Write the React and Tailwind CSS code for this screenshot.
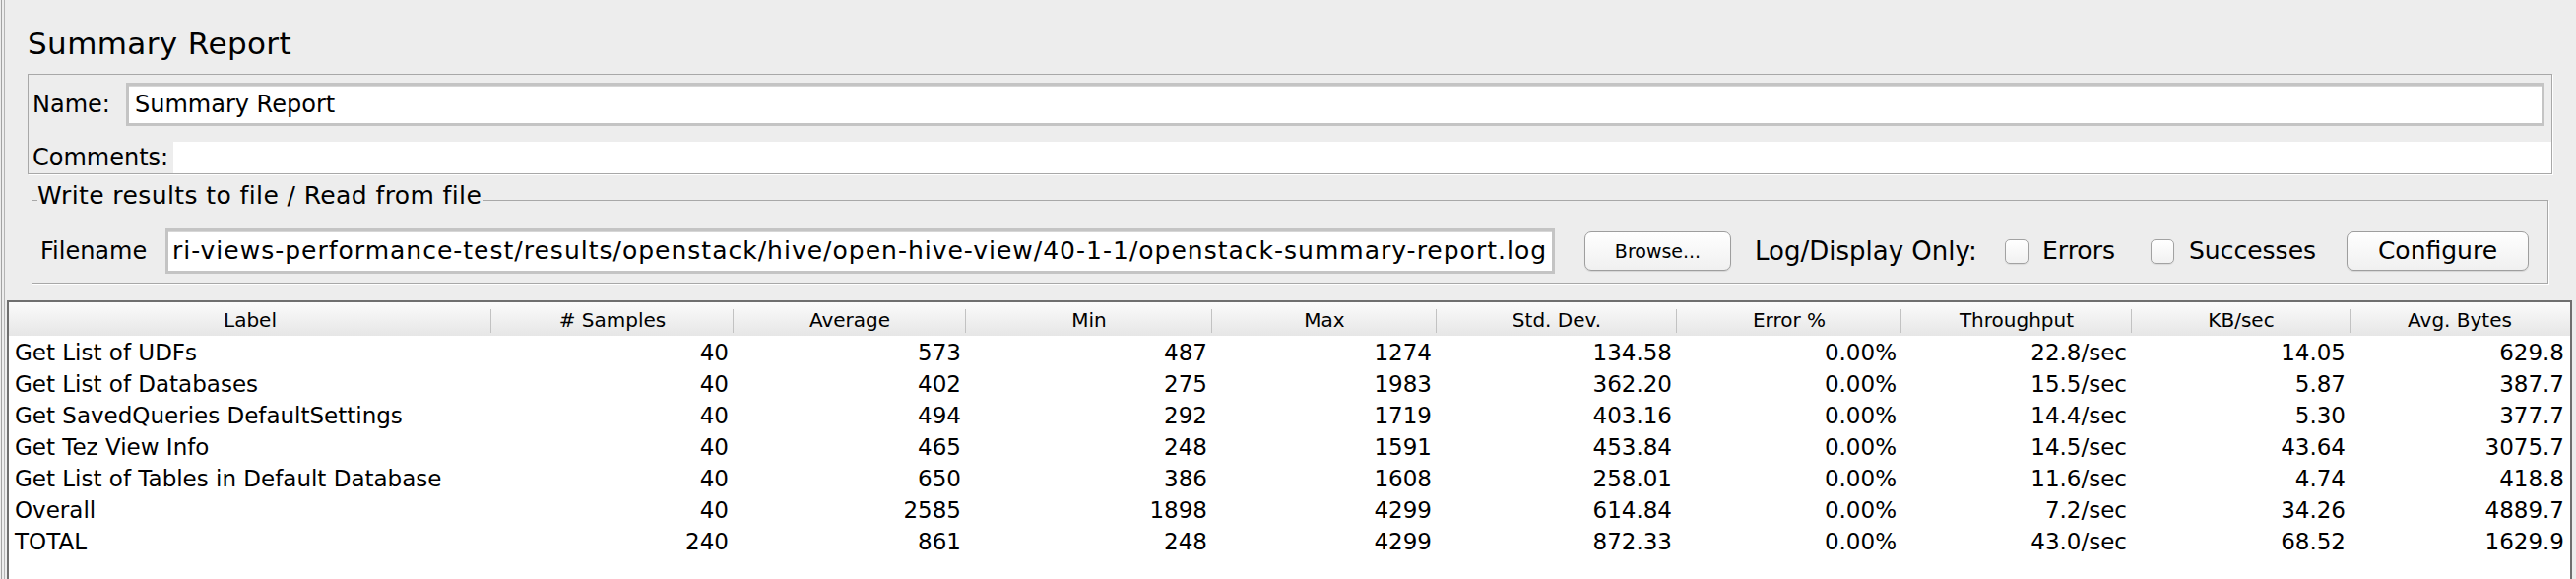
import React from "react";

const rows = [
  ["Get List of UDFs", "40", "573", "487", "1274", "134.58", "0.00%", "22.8/sec", "14.05", "629.8"],
  ["Get List of Databases", "40", "402", "275", "1983", "362.20", "0.00%", "15.5/sec", "5.87", "387.7"],
  ["Get SavedQueries DefaultSettings", "40", "494", "292", "1719", "403.16", "0.00%", "14.4/sec", "5.30", "377.7"],
  ["Get Tez View Info", "40", "465", "248", "1591", "453.84", "0.00%", "14.5/sec", "43.64", "3075.7"],
  ["Get List of Tables in Default Database", "40", "650", "386", "1608", "258.01", "0.00%", "11.6/sec", "4.74", "418.8"],
  ["Overall", "40", "2585", "1898", "4299", "614.84", "0.00%", "7.2/sec", "34.26", "4889.7"],
  ["TOTAL", "240", "861", "248", "4299", "872.33", "0.00%", "43.0/sec", "68.52", "1629.9"],
];

const headers = ["Label", "# Samples", "Average", "Min", "Max", "Std. Dev.", "Error %", "Throughput", "KB/sec", "Avg. Bytes"];

function Checkbox() {
  return (
    <div className="w-[24px] h-[25px] shrink-0 rounded-[5px] border border-[#a2a2a2] bg-gradient-to-b from-white to-[#f1f1f1] shadow-[0_1px_1px_rgba(0,0,0,0.08)]" />
  );
}

export default function App() {
  return (
    <div className="w-[2616px] h-[588px] overflow-hidden bg-[#ededed] text-black font-['DejaVu_Sans',sans-serif]">
      <div className="h-full ml-[1px] border-l border-[#a3a3a3]">
        <div className="h-full ml-[2px] border-l border-[#b4b4b4] flex flex-col">
          {/* Title */}
          <div className="mt-[26px] h-[36px] leading-[36px] text-[31px] pl-[23px] tracking-[0.4px] whitespace-nowrap">
            Summary Report
          </div>

          {/* Name / Comments box */}
          <div className="mt-[13px] ml-[23px] w-[2564px] border border-[#a8a8a8] shadow-[1px_1px_0_#ffffff] pl-[4px] pt-[8px] flex flex-col">
            <div className="flex items-center h-[44px]">
              <div className="w-[95px] text-[24px] whitespace-nowrap">Name:</div>
              <div className="w-[2456px] h-[44px] border-[3px] border-[#c4c4c4] shadow-[inset_0_1px_0_#d6d6d6] bg-white flex items-center pl-[6px] text-[24px] whitespace-nowrap">
                Summary Report
              </div>
            </div>
            <div className="flex items-center h-[32px] mt-[16px]">
              <div className="w-[143px] text-[24px] whitespace-nowrap">Comments:</div>
              <div className="flex-1 h-full bg-white" />
            </div>
          </div>

          {/* Write results group */}
          <div className="relative mt-[26px] ml-[27px] w-[2556px] border border-[#a8a8a8] shadow-[1px_1px_0_#ffffff] pl-[5px] pt-[28px] pb-[9px]">
            <div className="absolute top-[-19px] left-[5px] bg-[#ededed] pr-[2px] text-[25px] leading-[28px] tracking-[0.4px] whitespace-nowrap">
              Write results to file / Read from file
            </div>
            <div className="flex items-center h-[46px] pl-[3px] whitespace-nowrap">
              <div className="w-[127px] text-[24px]">Filename</div>
              <div className="w-[1411px] h-[46px] shrink-0 border-[3px] border-[#c4c4c4] shadow-[inset_0_1px_0_#d6d6d6] bg-white flex items-center pl-[4px] text-[25px] tracking-[1px] overflow-hidden">
                ri-views-performance-test/results/openstack/hive/open-hive-view/40-1-1/openstack-summary-report.log
              </div>
              <div className="ml-[30px] w-[149px] h-[40px] shrink-0 rounded-[7px] border border-[#9e9e9e] bg-gradient-to-b from-white to-[#f0f0f0] shadow-[0_1px_1px_rgba(0,0,0,0.1)] flex items-center justify-center text-[19px]">
                Browse...
              </div>
              <div className="ml-[24px] w-[254px] shrink-0 text-[26px]">Log/Display Only:</div>
              <Checkbox />
              <div className="ml-[14px] w-[110px] shrink-0 text-[25px]">Errors</div>
              <Checkbox />
              <div className="ml-[15px] w-[160px] shrink-0 text-[25px]">Successes</div>
              <div className="w-[185px] h-[40px] shrink-0 rounded-[7px] border border-[#9e9e9e] bg-gradient-to-b from-white to-[#f0f0f0] shadow-[0_1px_1px_rgba(0,0,0,0.1)] flex items-center justify-center text-[25px]">
                Configure
              </div>
            </div>
          </div>

          {/* Table */}
          <div className="mt-[17px] ml-[2px] w-[2605px] flex-1 bg-white border-t-2 border-l-2 border-r-2 border-[#6f6f6f]">
            <div className="grid grid-cols-[490px_246px_236px_250px_228px_244px_228px_234px_222px_222px] h-[34px] bg-gradient-to-b from-[#fbfbfb] to-[#e6e6e6]">
              {headers.map((h, i) => (
                <div key={h} className="relative flex items-center justify-center text-[20px] pt-[2px] whitespace-nowrap">
                  {h}
                  {i < headers.length - 1 && (
                    <div className="absolute right-0 top-[7px] h-[24px] w-px bg-[#c2c2c2]" />
                  )}
                </div>
              ))}
            </div>
            {rows.map((r) => (
              <div key={r[0]} className="grid grid-cols-[490px_246px_236px_250px_228px_244px_228px_234px_222px_222px] h-[32px] text-[23px] whitespace-nowrap">
                {r.map((c, i) => (
                  <div key={i} className={i === 0 ? "flex items-center pl-[6px]" : "flex items-center justify-end pr-[5px]"}>
                    {c}
                  </div>
                ))}
              </div>
            ))}
          </div>
        </div>
      </div>
    </div>
  );
}
